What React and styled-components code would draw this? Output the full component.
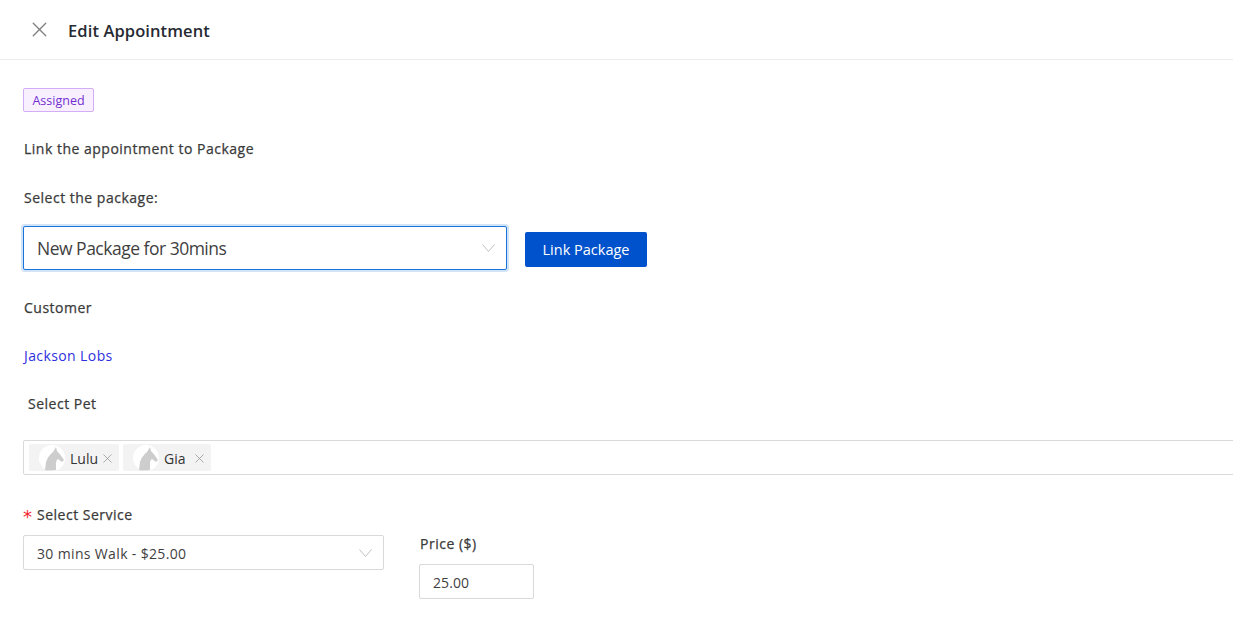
import React from 'react';
import styled, { createGlobalStyle } from 'styled-components';
import { X } from 'lucide-react';

const Global = createGlobalStyle`
  html, body { margin: 0; padding: 0; background: #fff; height: 100%; overflow: hidden; }
  body { font-family: "Open Sans", "Noto Sans", "Liberation Sans", sans-serif; color: #333; }
`;

const Page = styled.div`
  width: 1233px;
  height: 618px;
  overflow: hidden;
`;

const Header = styled.header`
  height: 59px;
  border-bottom: 1px solid #ececec;
  display: flex;
  align-items: center;
  gap: 19px;
  padding: 0 0 0 30px;
`;

const CloseButton = styled.button`
  width: 19px;
  height: 19px;
  padding: 0;
  border: 0;
  background: none;
  color: #7f7f7f;
  display: flex;
  align-items: center;
  justify-content: center;
  svg { flex: none; }
`;

const Title = styled.h1`
  margin: 0;
  padding-top: 1px;
  font-size: 16.5px;
  font-weight: 600;
  color: #262a33;
  letter-spacing: 0.1px;
`;

const Body = styled.main`
  padding: 28px 0 0 23px;
  display: flex;
  flex-direction: column;
  align-items: flex-start;
`;

const Badge = styled.span`
  box-sizing: border-box;
  width: 71px;
  height: 24px;
  display: flex;
  align-items: center;
  justify-content: center;
  background: #f9f0ff;
  border: 1px solid #d3adf7;
  border-radius: 2px;
  color: #722ed1;
  font-size: 12.5px;
`;

const Label = styled.label`
  display: block;
  font-size: 14px;
  line-height: 20px;
  font-weight: 400;
  -webkit-text-stroke: 0.25px #3a3a3a;
  color: #3a3a3a;
  letter-spacing: 0.5px;
  margin-top: ${p => p.$top || 0}px;
  padding-left: ${p => p.$indent ?? 1}px;
`;

const Required = styled.span`
  display: inline-block;
  width: 14px;
  color: #f5222d;
  -webkit-text-stroke: 0;
  font-family: "DejaVu Sans", sans-serif;
  font-size: 18px;
  line-height: 14px;
  vertical-align: -3px;
`;

const PackageRow = styled.div`
  display: flex;
  align-items: center;
  gap: 18px;
  margin-top: 18px;
`;

const SelectBox = styled.div`
  box-sizing: border-box;
  width: ${p => p.$width}px;
  height: ${p => p.$height}px;
  display: flex;
  align-items: center;
  justify-content: space-between;
  padding: ${p => p.$textTop || 0}px 11px 0 13px;
  background: #fff;
  border: 1px solid ${p => (p.$focused ? '#1a73d9' : '#d9d9d9')};
  border-radius: 2px;
  box-shadow: ${p => (p.$focused ? '0 0 0 2px rgba(24,115,217,0.2)' : 'none')};
  font-size: ${p => p.$fontSize}px;
  letter-spacing: ${p => p.$spacing}px;
  color: #3f3f3f;
`;

const Chevron = styled.svg`
  flex: none;
  width: 13px;
  height: 8px;
  color: #bfbfbf;
`;

const ButtonSlot = styled.div`
  padding-top: 3px;
`;

const PrimaryButton = styled.button`
  display: block;
  width: 122px;
  height: 35px;
  border: 0;
  border-radius: 2px;
  background: #0052cc;
  color: #fff;
  font-family: inherit;
  font-size: 14.5px;
  padding: 0;
`;

const CustomerLink = styled.a`
  display: block;
  margin-top: 28px;
  padding-left: 1px;
  font-size: 14px;
  line-height: 20px;
  letter-spacing: 0.4px;
  color: #2f2fe0;
  text-decoration: none;
`;

const MultiSelect = styled.div`
  box-sizing: border-box;
  width: 1230px;
  height: 35px;
  margin-top: 26px;
  display: flex;
  align-items: center;
  gap: 4px;
  padding: 0 0 0 5px;
  border: 1px solid #d9d9d9;
  border-radius: 2px;
`;

const Tag = styled.div`
  box-sizing: border-box;
  width: ${p => p.$width}px;
  height: 27px;
  display: flex;
  align-items: center;
  padding: 1px 4px 0 10px;
  background: #f3f3f3;
  border-radius: 2px;
  font-size: 14px;
  color: #333;
  svg.close { color: #8c8c8c; flex: none; margin-left: auto; }
`;

const Avatar = styled.svg`
  flex: none;
  width: 26px;
  height: 26px;
  margin: -1px 5px 0 0;
`;

const ServiceRow = styled.div`
  display: flex;
  align-items: flex-start;
  gap: 35px;
  margin-top: 30px;
`;

const Column = styled.div`
  display: flex;
  flex-direction: column;
  align-items: flex-start;
  gap: ${p => p.$gap}px;
  padding-top: ${p => p.$top || 0}px;
`;

const PriceInput = styled.div`
  box-sizing: border-box;
  width: 115px;
  height: 35px;
  display: flex;
  align-items: center;
  padding: 1px 0 0 13px;
  border: 1px solid #d9d9d9;
  border-radius: 2px;
  font-size: 14px;
  letter-spacing: 0.1px;
  color: #3f3f3f;
`;

const SelectArrow = () => (
  <Chevron viewBox="0 0 13 8">
    <polyline points="0.5,0.5 6.5,7.5 12.5,0.5" fill="none" stroke="currentColor" strokeWidth="1" />
  </Chevron>
);

const PetAvatar = () => (
  <Avatar viewBox="0 0 26 26">
    <circle cx="13" cy="13" r="13" fill="#fff" />
    <path d="M6 25 L7 17 Q9 11 14 7 L17 2 L18 6 Q22 10 25 15 L23 17 L19 14 Q17 15 17 18 L17 25 Q11 26 6 25 Z" fill="#cdcdcd" />
  </Avatar>
);

const App = () => (
  <Page>
    <Global />
    <Header>
      <CloseButton aria-label="Close">
        <X size={25} strokeWidth={1.3} />
      </CloseButton>
      <Title>Edit Appointment</Title>
    </Header>
    <Body>
      <Badge>Assigned</Badge>
      <Label $top={27}>Link the appointment to Package</Label>
      <Label $top={29}>Select the package:</Label>
      <PackageRow>
        <SelectBox $width={484} $height={44} $fontSize={17.5} $spacing={-0.5} $focused>
          New Package for 30mins
          <SelectArrow />
        </SelectBox>
        <ButtonSlot>
          <PrimaryButton>Link Package</PrimaryButton>
        </ButtonSlot>
      </PackageRow>
      <Label $top={28}>Customer</Label>
      <CustomerLink href="#">Jackson Lobs</CustomerLink>
      <Label $top={28} $indent={5}>Select Pet</Label>
      <MultiSelect>
        <Tag $width={90}><PetAvatar />Lulu<X className="close" size={15} strokeWidth={1.1} /></Tag>
        <Tag $width={88}><PetAvatar />Gia<X className="close" size={15} strokeWidth={1.1} /></Tag>
      </MultiSelect>
      <ServiceRow>
        <Column $gap={10}>
          <Label $indent={0}><Required>*</Required>Select Service</Label>
          <SelectBox $width={361} $height={35} $fontSize={14} $spacing={0.35} $textTop={1}>
            30 mins Walk - $25.00
            <SelectArrow />
          </SelectBox>
        </Column>
        <Column $gap={10} $top={29}>
          <Label>Price ($)</Label>
          <PriceInput>25.00</PriceInput>
        </Column>
      </ServiceRow>
    </Body>
  </Page>
);

export default App;
